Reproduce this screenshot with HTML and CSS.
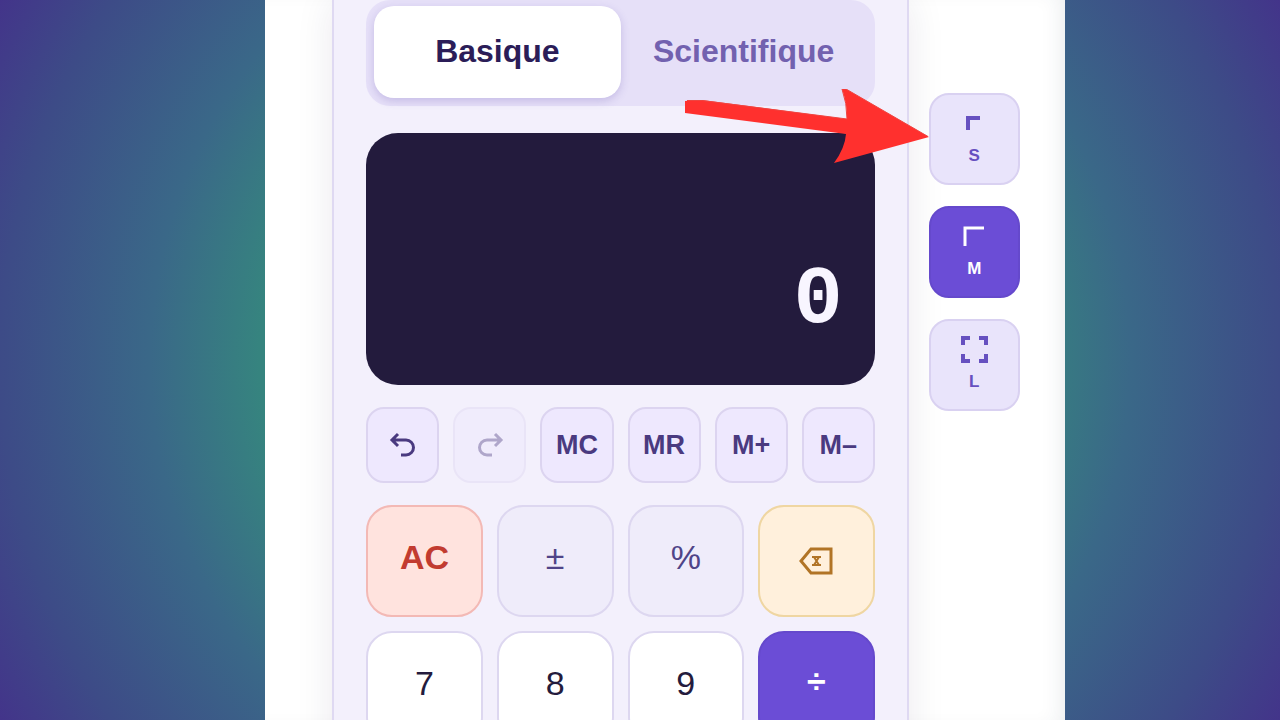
FILE: index.html
```html
<!DOCTYPE html>
<html lang="fr">
<head>
<meta charset="utf-8">
<meta name="viewport" content="width=device-width, initial-scale=1">
<title>Calculatrice</title>
<link rel="stylesheet" href="styles.css">
</head>
<body>
<main class="stage">
  <section class="calculator" aria-label="Calculatrice">
    <div class="modes">
      <button class="mode mode-active" type="button">Basique</button>
      <button class="mode" type="button">Scientifique</button>
    </div>
    <output class="display">0</output>
    <div class="memory">
      <button class="mem" type="button" aria-label="Annuler">
        <svg class="history-icon" viewBox="0 0 30 30"><path d="M10 4 4 10l6 6M4 10h14a7 7 0 0 1 0 15h-5"/></svg>
      </button>
      <button class="mem" type="button" aria-label="Rétablir" disabled>
        <svg class="history-icon" viewBox="0 0 30 30"><path d="m20 4 6 6-6 6M26 10H12a7 7 0 0 0 0 15h5"/></svg>
      </button>
      <button class="mem" type="button">MC</button>
      <button class="mem" type="button">MR</button>
      <button class="mem" type="button">M+</button>
      <button class="mem" type="button">M–</button>
    </div>
    <div class="keys">
      <button class="key key-clear" type="button">AC</button>
      <button class="key key-function" type="button">±</button>
      <button class="key key-function" type="button">%</button>
      <button class="key key-delete" type="button" aria-label="Effacer">
        <svg class="delete-icon" viewBox="0 0 36 28"><path d="M13 2h20v24H13L3 14z"/><path d="M14 10h9M14 18h9M16 10l5 8M21 10l-5 8" stroke-width="2"/></svg>
      </button>
      <button class="key" type="button">7</button>
      <button class="key" type="button">8</button>
      <button class="key" type="button">9</button>
      <button class="key key-operator" type="button">÷</button>
    </div>
  </section>
  <aside class="sizes" aria-label="Taille">
    <button class="size" type="button">
      <svg class="size-icon" viewBox="0 0 30 30"><path d="M9 22V10h12" stroke-width="4"/></svg>
      <span>S</span>
    </button>
    <button class="size size-active" type="button">
      <svg class="size-icon" viewBox="0 0 30 30"><path d="M6 25V7h19" stroke-width="3"/></svg>
      <span>M</span>
    </button>
    <button class="size" type="button">
      <svg class="size-icon" viewBox="0 0 30 30"><path d="M4 11V4h7M20 4h7v7M27 20v7h-7M11 27H4v-7" stroke-width="4"/></svg>
      <span>L</span>
    </button>
  </aside>
  <svg class="arrow" viewBox="0 0 244 74" aria-hidden="true">
    <path d="M0 12 17 11 162 30Q162 14 157 0h4L244 48 149 74Q160 59 161 45L0 24z" fill="#ff302e"/>
    <path d="M2 11.500h15L162 30Q162 14 157 0h4l82 47.500" fill="none" stroke="#ef4440" stroke-width="1"/>
  </svg>
</main>
</body>
</html>
```
FILE: styles.css
```css
* {
  box-sizing: border-box;
}

body {
  margin: 0;
  min-height: 100vh;
  overflow: hidden;
  display: flex;
  justify-content: center;
  padding-left: 50px;
  font-family: "Liberation Sans", Arial, sans-serif;
  background: radial-gradient(circle at 50% 50%, #36847f 380px, #3a6888 490px, #3d4b87 640px, #43348a 735px);
}

button {
  padding: 0;
  font: inherit;
  color: inherit;
}

svg {
  fill: none;
  stroke: currentColor;
}

.stage {
  position: relative;
  width: 65%;
  height: 100vh;
  overflow: hidden;
  display: flex;
  align-items: flex-start;
  gap: 20px;
  padding: 0 45px 0 67px;
  background: #fff;
  box-shadow: inset -16px 0 24px -16px rgba(30, 60, 70, 0.12);
}

.calculator {
  flex: 1;
  display: flex;
  flex-direction: column;
  padding: 0 32px 16px;
  color: #241b3d;
  background: #f3f0fc;
  border: solid #dfd9f2;
  border-width: 0 2px;
  box-shadow: 0 0 36px rgba(36, 27, 61, 0.09);
}

.modes {
  display: grid;
  grid-template-columns: 1fr 1fr;
  height: 106px;
  padding: 6px 8px 8px;
  background: #e6e0f8;
  border-radius: 24px;
}

.mode {
  padding-bottom: 2px;
  border: 0;
  border-radius: 20px;
  background: transparent;
  color: #7261af;
  font-size: 32px;
  font-weight: 700;
}

.mode-active {
  background: #fff;
  color: #2b1d58;
  box-shadow: 0 3px 9px rgba(90, 70, 170, 0.24);
}

.display {
  height: 252px;
  margin: 27px 0 22px;
  padding: 0 32px 44px;
  display: flex;
  justify-content: flex-end;
  align-items: flex-end;
  background: #231b3d;
  color: #f8f5ff;
  border-radius: 32px;
  font: 700 82px/80px "Liberation Mono", "Courier New", monospace;
}

.memory {
  display: grid;
  grid-template-columns: repeat(6, 1fr);
  gap: 14px;
}

.mem {
  height: 76px;
  display: grid;
  place-items: center;
  border: 2px solid #dcd4f0;
  border-radius: 18px;
  background: #eee8fe;
  color: #4a3a80;
  font-size: 27px;
  font-weight: 700;
}

.mem:disabled {
  opacity: 0.4;
}

.history-icon {
  width: 30px;
  height: 30px;
  stroke-width: 3;
}

.keys {
  display: grid;
  grid-template-columns: repeat(4, 1fr);
  gap: 14px;
  margin-top: 22px;
}

.key {
  height: 112px;
  padding-bottom: 8px;
  display: grid;
  place-items: center;
  border: 2px solid #ddd7f0;
  border-radius: 26px;
  background: #fff;
  font-size: 34px;
}

.key-clear {
  border-color: #f3b9b5;
  background: #ffe3de;
  color: #c23b30;
  font-weight: 700;
}

.key-function {
  background: #efecfa;
  color: #4f4488;
}

.key-delete {
  padding-bottom: 0;
  border-color: #efd6a2;
  background: #fff0dc;
  color: #b17426;
}

.delete-icon {
  width: 36px;
  height: 28px;
  stroke-width: 3;
}

.key-operator {
  padding-bottom: 12px;
  border-color: #6549cc;
  background: #6b4dd6;
  color: #fff;
  font-weight: 700;
}

.sizes {
  flex: none;
  display: flex;
  flex-direction: column;
  gap: 21px;
  width: 91px;
  padding-top: 93px;
}

.size {
  height: 92px;
  display: flex;
  flex-direction: column;
  align-items: center;
  justify-content: center;
  gap: 8px;
  padding-bottom: 4px;
  border: 2px solid #d9d1f1;
  border-radius: 20px;
  background: #e9e4fb;
  color: #6650c0;
  font-size: 17px;
  font-weight: 700;
  line-height: 20px;
}

.size-active {
  border-color: #6549cc;
  background: #6b4dd6;
  color: #fff;
}

.size-icon {
  width: 30px;
  height: 30px;
}

.arrow {
  position: absolute;
  top: 89px;
  left: 420px;
  width: 244px;
  height: 74px;
  stroke: none;
}
```
